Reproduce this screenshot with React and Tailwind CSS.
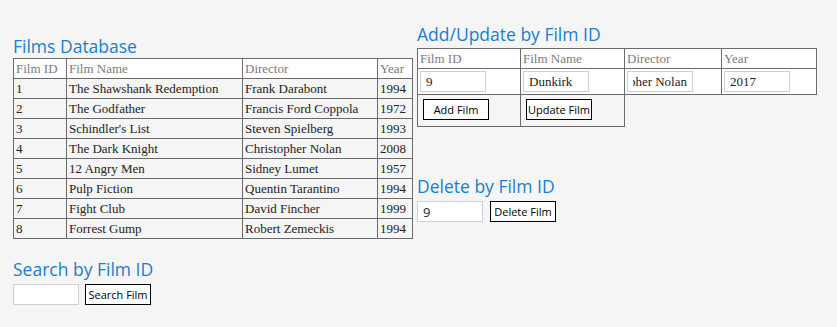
import React from 'react';

const films = [
  [1, 'The Shawshank Redemption', 'Frank Darabont', 1994],
  [2, 'The Godfather', 'Francis Ford Coppola', 1972],
  [3, "Schindler's List", 'Steven Spielberg', 1993],
  [4, 'The Dark Knight', 'Christopher Nolan', 2008],
  [5, '12 Angry Men', 'Sidney Lumet', 1957],
  [6, 'Pulp Fiction', 'Quentin Tarantino', 1994],
  [7, 'Fight Club', 'David Fincher', 1999],
  [8, 'Forrest Gump', 'Robert Zemeckis', 1994],
];

const sans = "font-['Open_Sans','Noto_Sans',sans-serif]";
const serif = "font-['Liberation_Serif','Times_New_Roman',serif]";

function Heading({ children }) {
  return (
    <h2 className={`${sans} text-[17.5px] leading-[24px] h-[24px] text-[#1a7dd0] whitespace-nowrap`}>
      {children}
    </h2>
  );
}

function Btn({ children, className = '' }) {
  return (
    <button
      type="button"
      className={`${sans} w-[66px] h-[21px] bg-white border border-black text-[11px] leading-none text-black p-0 ${className}`}
    >
      {children}
    </button>
  );
}

function Field({ value, font = serif, className = '' }) {
  return (
    <input
      readOnly
      value={value}
      className={`${font} w-[66px] h-[21px] bg-white border border-[#d0d0d0] px-[5px] text-[13px] text-[#222] outline-none ${className}`}
    />
  );
}

export default function App() {
  const th = 'border border-[#6b6b6b] text-left font-normal text-[#7b7b7b] pl-[2px] h-[20px] p-0 align-middle';
  const td = 'border border-[#6b6b6b] text-[#222] pl-[2px] h-[20px] p-0 align-middle whitespace-nowrap';
  const cell = 'border border-[#6b6b6b] pl-[2px] pt-[2px] pb-[2px] pr-0';
  const btnCell = 'border border-[#6b6b6b] pl-[5px] pt-[4px] pb-[6px] pr-0';

  return (
    <div className="w-[837px] h-[327px] bg-[#f5f5f5] overflow-hidden flex items-start">
      {/* left column */}
      <div className="ml-[13px] w-[400px] mt-[34px] flex flex-col">
        <Heading>Films Database</Heading>
        <table className={`${serif} text-[13px] leading-[15px] border-collapse table-fixed w-[400px]`}>
          <thead>
            <tr className="bg-white">
              <th className={`${th} w-[53px]`}>Film ID</th>
              <th className={`${th} w-[176px]`}>Film Name</th>
              <th className={`${th} w-[135px]`}>Director</th>
              <th className={th}>Year</th>
            </tr>
          </thead>
          <tbody>
            {films.map(([id, name, dir, year]) => (
              <tr key={id}>
                <td className={td}>{id}</td>
                <td className={td}>{name}</td>
                <td className={td}>{dir}</td>
                <td className={td}>{year}</td>
              </tr>
            ))}
          </tbody>
        </table>

        <div className="mt-[18px]">
          <Heading>Search by Film ID</Heading>
          <div className="flex items-center gap-[6px] mt-[3px]">
            <Field value="" font={sans} className="text-[12px]" />
            <Btn>Search Film</Btn>
          </div>
        </div>
      </div>

      {/* right column */}
      <div className="ml-[4px] w-[400px] mt-[22px] flex flex-col">
        <Heading>Add/Update by Film ID</Heading>
        <table className={`${serif} text-[13px] leading-[15px] border-collapse table-fixed w-[400px] mt-[2px]`}>
          <thead>
            <tr className="bg-white">
              <th className={`${th} w-[103px]`}>Film ID</th>
              <th className={`${th} w-[104px]`}>Film Name</th>
              <th className={`${th} w-[97px]`}>Director</th>
              <th className={th}>Year</th>
            </tr>
          </thead>
          <tbody>
            <tr className="bg-white">
              <td className={cell}>
                <Field value="9" />
              </td>
              <td className={cell}>
                <Field value="Dunkirk" />
              </td>
              <td className={cell}>
                <div className={`${serif} w-[66px] h-[21px] bg-white border border-[#d0d0d0] px-[5px] text-[13px] text-[#222] flex items-center`}>
                  <div className="w-full overflow-hidden flex justify-end whitespace-nowrap">
                    <span>Christopher Nolan</span>
                  </div>
                </div>
              </td>
              <td className={cell}>
                <Field value="2017" />
              </td>
            </tr>
            <tr>
              <td className={btnCell}>
                <Btn>Add Film</Btn>
              </td>
              <td className={btnCell}>
                <Btn>Update Film</Btn>
              </td>
            </tr>
          </tbody>
        </table>

        <div className="mt-[47px]">
          <Heading>Delete by Film ID</Heading>
          <div className="flex items-center gap-[7px] mt-[3px]">
            <Field value="9" font={sans} className="text-[12px] w-[65px]" />
            <Btn className="w-[65px]">Delete Film</Btn>
          </div>
        </div>
      </div>
    </div>
  );
}
